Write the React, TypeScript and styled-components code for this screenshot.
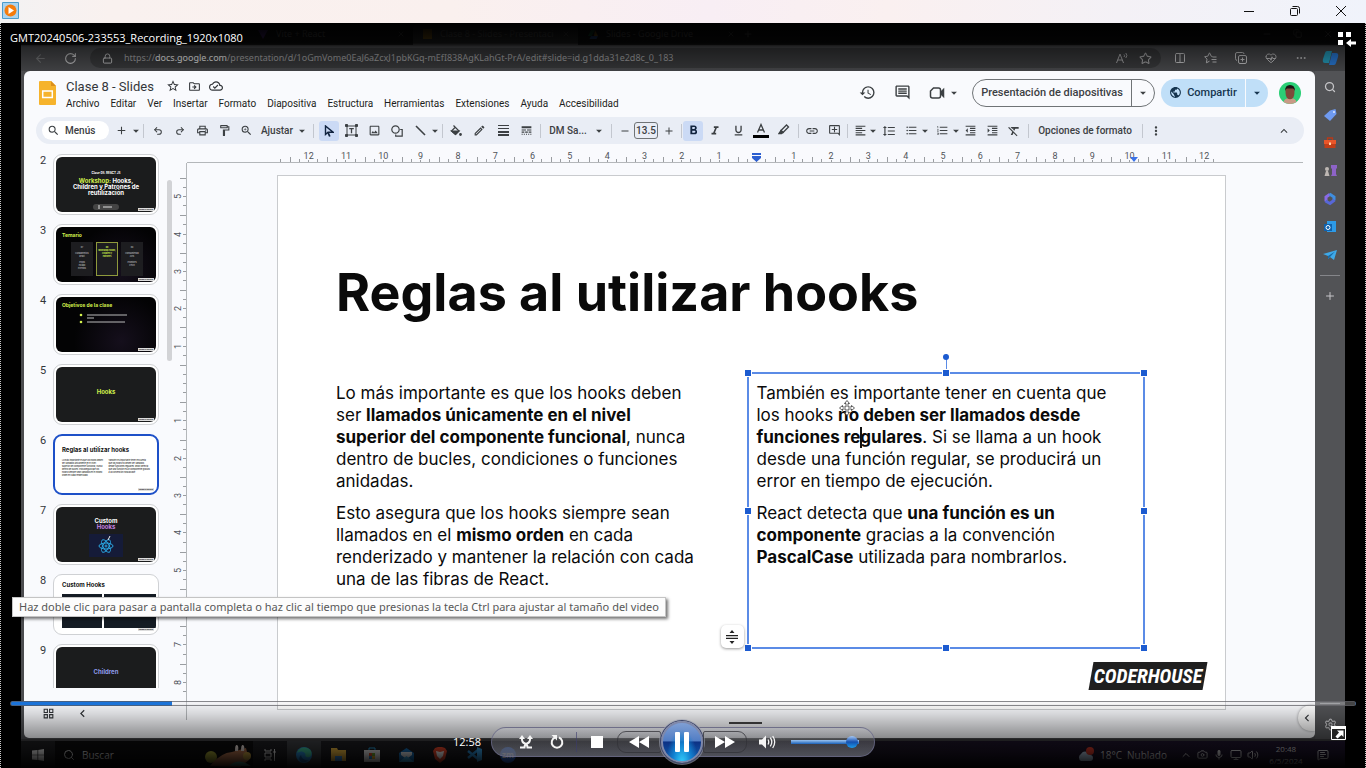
import React from "react";
import styled, { createGlobalStyle, css } from "styled-components";
import {
  MdAdd, MdArrowDropDown, MdChevronLeft, MdFormatAlignLeft, MdFormatBold, MdFormatClear,
  MdFormatIndentDecrease, MdFormatIndentIncrease, MdFormatItalic, MdFormatLineSpacing,
  MdFormatListBulleted, MdFormatListNumbered, MdFormatUnderlined, MdHistory, MdKeyboardArrowUp,
  MdLineStyle, MdLink, MdMoreVert, MdOutlineAddComment, MdOutlineCloudDone, MdOutlineDriveFileMove,
  MdOutlineEdit, MdOutlineFormatPaint, MdOutlineGridView, MdOutlineImage,
  MdOutlineInsertComment, MdOutlinePrint, MdPublic, MdRemove, MdSearch, MdStarBorder, MdZoomIn, MdMic,
} from "react-icons/md";
import {
  ArrowLeft, Columns2, Copy, HeartPulse, Lock, Minus, MoreHorizontal, Plus, Redo2, RotateCw, Search,
  Settings, Star, Undo2, X, MessageSquareText, ChevronUp, Volume2, Monitor, Camera,
} from "lucide-react";

const Global = createGlobalStyle`
  *, *::before, *::after { box-sizing: border-box; }
  body { margin: 0; background: #000; font-family: Roboto, "Liberation Sans", sans-serif; }
  button, input { font: inherit; color: inherit; margin: 0; }
  button { border: 0; padding: 0; background: none; }
  a { color: inherit; text-decoration: none; }
  h1, p, ol { margin: 0; padding: 0; }
  svg { display: block; flex: none; }
`;

const segoe = `"Open Sans", "Noto Sans", sans-serif`;
const slideFont = `"Inter", "Open Sans", sans-serif`;

/* ---------- window frame ---------- */
const Window = styled.div`
  display: flex;
  flex-direction: column;
  min-height: 100vh;
`;
const TitleBar = styled.header`
  display: flex;
  align-items: center;
  justify-content: space-between;
  height: 23px;
  padding: 0 17px 2px 2px;
  background: linear-gradient(90deg, #f3f2f3, #f9f1ef 8%, #faf0ee 33%, #f8eef4 52%, #faf0f0 65%, #f4f1f6 82%, #f0f3fb);
`;
const WindowButtons = styled.div`
  display: flex;
  gap: 30px;
`;
const PlainButton = styled.button`
  display: grid;
  place-items: center;
`;
const Stage = styled.main`
  position: relative;
  flex: 1;
  display: flex;
  padding: 0 20px;
  border: dotted #c8c8c8;
  border-width: 0 1px;
  background: #000;
`;
const Video = styled.div`
  flex: 1;
  min-width: 0;
  display: flex;
  flex-direction: column;
  background: #4b4c4f;
`;

/* ---------- browser ---------- */
const Tabs = styled.div`
  display: flex;
  align-items: center;
  height: 22px;
  padding-left: 62px;
  background: #1d1e20;
  color: #b5b5b5;
  font: 9px/14px "Noto Sans", sans-serif;
`;
const Tab = styled.div<{ $active?: boolean }>`
  display: flex;
  align-items: center;
  gap: 8px;
  width: 165px;
  height: 22px;
  padding: 0 8px 0 10px;
  white-space: nowrap;
  overflow: hidden;
  border-radius: 6px 6px 0 0;
  background: ${(p) => (p.$active ? "#4b4c4f" : "transparent")};
  span { flex: 1; overflow: hidden; }
`;
const TabButtons = styled.div`
  display: flex;
  gap: 21px;
  margin-left: auto;
  padding-right: 12px;
`;
const AddressRow = styled.div`
  display: flex;
  align-items: center;
  height: 26px;
  padding: 0 6px 0 13px;
  gap: 13px;
  color: #c9c9cb;
`;
const NavButtons = styled.div`
  display: flex;
  gap: 17px;
`;
const AddressBox = styled.div`
  flex: 1;
  display: flex;
  align-items: center;
  gap: 11px;
  height: 20px;
  padding: 0 9px 0 12px;
  border-radius: 10px;
  background: #3a3b3d;
  color: #a6a6a8;
  font: 9px/16px "Noto Sans", sans-serif;
  b { font-weight: 400; color: #f0f0f0; }
  a { flex: 1; }
`;
const AddressTools = styled.div`
  display: flex;
  align-items: center;
  gap: 18px;
  svg:last-child { margin-left: -3px; }
`;
const Body = styled.div`
  flex: 1;
  display: flex;
  padding-left: 3px;
`;
const EdgeBar = styled.aside`
  display: flex;
  flex-direction: column;
  align-items: center;
  gap: 12px;
  width: 30px;
  padding: 8px 0 8px;
  background: #525356;
  color: #c5c5c8;
`;
const EdgeRule = styled.hr`
  width: 20px;
  height: 1px;
  margin: 0 0 2px;
  border: 0;
  background: #85868a;
`;

/* ---------- presentation editor ---------- */
const Docs = styled.section`
  flex: 1;
  min-width: 0;
  display: flex;
  flex-direction: column;
  margin-bottom: 1px;
  border-radius: 6px 6px 5px 5px;
  background: #f9fafd;
  color: #33363a;
  overflow: hidden;
`;
const DocsHeader = styled.header`
  display: flex;
  align-items: center;
  height: 46px;
  padding: 0 14px 3px 15px;
`;
const Names = styled.div`
  display: flex;
  flex-direction: column;
  gap: 1px;
  margin: 4px 0 0 10px;
`;
const TitleRow = styled.div`
  display: flex;
  align-items: center;
  gap: 8px;
  height: 17px;
  font-size: 13px;
  line-height: 17px;
  span { margin-right: 4px; }
`;
const Menu = styled.nav`
  display: flex;
  gap: 11px;
  height: 16px;
  font-size: 10px;
  line-height: 16px;
  color: #1c1e20;
`;
const HeaderTools = styled.div`
  display: flex;
  align-items: center;
  margin-left: auto;
  gap: 18px;
  color: #3c4043;
`;
const CameraButton = styled(PlainButton)`
  display: flex;
  align-items: center;
  gap: 2px;
  margin-right: -7px;
`;
const SplitButton = styled.div<{ $filled?: boolean }>`
  display: flex;
  height: 28px;
  border-radius: 14px;
  font-size: 11px;
  font-weight: 500;
  ${(p) =>
    p.$filled
      ? css`
          margin: 0 -7px 0 -12px;
          background: #c0dff8;
          color: #16354f;
        `
      : css`
          border: 1px solid #6f7376;
          color: #3c4043;
        `}
  button { display: flex; align-items: center; justify-content: center; }
  button:first-child { gap: 5px; width: ${(p) => (p.$filled ? 84 : 158)}px; }
  button:last-child {
    width: 23px;
    border-left: 1px solid ${(p) => (p.$filled ? "#f9fafd" : "#6f7376")};
  }
`;
const Toolbar = styled.div`
  display: flex;
  align-items: center;
  height: 27px;
  margin: 0 11px 0 12px;
  padding: 0 10px 0 6px;
  border-radius: 14px;
  background: #e9edf5;
  color: #3c4043;
  font-size: 10px;
  font-weight: 500;
`;
const SearchPill = styled.button`
  display: flex;
  align-items: center;
  gap: 5px;
  width: 67px;
  height: 19px;
  padding-left: 5px;
  border-radius: 10px;
  background: #fff;
  font-weight: 500;
`;
const Tool = styled.button<{ $w?: number; $on?: boolean }>`
  display: flex;
  align-items: center;
  justify-content: center;
  width: ${(p) => p.$w ?? 22}px;
  height: 20px;
  border-radius: 3px;
  white-space: nowrap;
  font-weight: 500;
  background: ${(p) => (p.$on ? "#cbdaf5" : "transparent")};
`;
const Sep = styled.span<{ $w?: number }>`
  width: ${(p) => p.$w ?? 6}px;
  height: 14px;
  background: linear-gradient(#c3c7cf, #c3c7cf) center / 1px 100% no-repeat;
`;
const SizeInput = styled.input`
  width: 24px;
  height: 17px;
  margin: 0 1px;
  padding: 0;
  border: 1px solid #6f7376;
  border-radius: 3px;
  background: transparent;
  text-align: center;
  font-size: 10px;
`;
const Spacer = styled.span`
  flex: 1;
`;

const Workspace = styled.div`
  flex: 1;
  display: grid;
  grid-template-columns: 150px 13px minmax(0, 1fr);
`;
const LeftPane = styled.div`
  display: flex;
  flex-direction: column;
`;
const FilmArea = styled.div`
  flex: 1 1 0;
  min-height: 0;
  display: flex;
  justify-content: space-between;
  padding: 10px 2px 0 16px;
  overflow: hidden;
`;
const ScrollThumb = styled.div`
  width: 5px;
  height: 181px;
  margin-top: 26px;
  border-radius: 3px;
  background: #d2d3d6;
`;
const Film = styled.ol`
  display: flex;
  flex-direction: column;
  gap: 9px;
  list-style: none;
`;
const FilmItem = styled.li`
  display: grid;
  grid-template-columns: 13px 106px;
  height: 61px;
  font-size: 11px;
  line-height: 14px;
`;
const Frame = styled.div<{ $selected?: boolean }>`
  padding: ${(p) => (p.$selected ? 1 : 2)}px;
  height: 61px;
  border-radius: 9px;
  background: #fff;
  border: ${(p) => (p.$selected ? "2px solid #1d50c8" : "1px solid #cfd1d4")};
`;
const Mini = styled.div<{ $light?: boolean; $glow?: boolean }>`
  position: relative;
  display: flex;
  flex-direction: column;
  height: 100%;
  padding: 5px 6px;
  border-radius: 6px;
  overflow: hidden;
  color: #fff;
  background: ${(p) =>
    p.$light ? "#fff" : p.$glow ? "radial-gradient(circle at 65% 80%, #150f1c, #030304 60%)" : "#1b1c1d"};
  font: 700 6px/6px ${slideFont};
`;
const MiniText = styled.div<{ $color?: string; $top?: number; $left?: boolean; $small?: boolean }>`
  margin-top: ${(p) => p.$top ?? 0}px;
  text-align: ${(p) => (p.$left ? "left" : "center")};
  color: ${(p) => p.$color ?? "#fff"};
  font-size: ${(p) => (p.$small ? 3 : 6)}px;
`;
const MiniArt = styled.svg<{ $top: number; $left?: boolean }>`
  align-self: ${(p) => (p.$left ? "flex-start" : "center")};
  margin: ${(p) => p.$top}px 0 0 ${(p) => (p.$left ? 17 : 0)}px;
`;
const MiniTag = styled.i`
  position: absolute;
  right: 2px;
  bottom: 1px;
  padding: 0 1px;
  background: #ddd;
  color: #222;
  font: italic 700 2px/3px "Liberation Sans Narrow", "Liberation Sans", sans-serif;
`;
const Lime = styled.span`
  color: #d2f04c;
  font-size: 5px;
`;
const MiniCards = styled.div`
  display: grid;
  grid-template-columns: 22px 22px 22px;
  gap: 3px;
  margin: 4px 0 0 9px;
`;
const MiniCard = styled.div<{ $on?: boolean }>`
  height: 34px;
  padding: 3px 0;
  border: 1px solid ${(p) => (p.$on ? "#8f9a3c" : "#1d1d20")};
  background: #1d1d20;
  text-align: center;
  font-size: 2px;
  line-height: 3px;
  color: ${(p) => (p.$on ? "#d2f04c" : "#a5a5a8")};
`;
const MiniColumns = styled.div`
  display: grid;
  grid-template-columns: 1fr 1fr;
  gap: 5px;
  margin-top: 6px;
  color: #222;
  font-size: 2px;
  line-height: 3px;
  font-weight: 500;
`;
const MiniCode = styled.div`
  display: grid;
  grid-template-columns: 40px 54px;
  gap: 2px;
  margin-top: 6px;
  div { height: 34px; background: #151c24; }
`;
const BottomTools = styled.div`
  display: flex;
  align-items: center;
  gap: 20px;
  height: 50px;
  padding-left: 18px;
`;

const RulerV = styled.div`
  display: flex;
  flex-direction: column;
  margin: 19px 0 18px;
  padding: 15px 0 19px;
  border-right: 1px solid #b4b7ba;
  font-size: 9px;
  color: #50545a;
`;
const tick = "#9a9da1";
const CellV = styled.div`
  flex: 1;
  display: grid;
  place-items: center start;
  padding-right: 4px;
  background:
    linear-gradient(${tick}, ${tick}) right 0 top 0 / 6px 1px no-repeat,
    linear-gradient(${tick}, ${tick}) right 0 top 25% / 3px 1px no-repeat,
    linear-gradient(${tick}, ${tick}) right 0 top 50% / 3px 1px no-repeat,
    linear-gradient(${tick}, ${tick}) right 0 top 75% / 3px 1px no-repeat;
  span { transform: rotate(-90deg); line-height: 9px; width: 9px; text-align: center; }
`;
const RulerH = styled.div`
  position: relative;
  display: flex;
  height: 19px;
  margin-right: 12px;
  padding: 0 80px 0 93px;
  border-bottom: 1px solid #b4b7ba;
  font-size: 9px;
  color: #50545a;
`;
const RulerStart = styled.div`
  width: 10px;
  background: linear-gradient(${tick}, ${tick}) left 0 bottom 0 / 1px 3px no-repeat;
`;
const CellH = styled.div`
  flex: 1;
  padding-top: 8px;
  text-align: center;
  line-height: 9px;
  background:
    linear-gradient(${tick}, ${tick}) left 0 bottom 0 / 1px 5px no-repeat,
    linear-gradient(${tick}, ${tick}) left 25% bottom 0 / 1px 3px no-repeat,
    linear-gradient(${tick}, ${tick}) left 50% bottom 0 / 1px 2px no-repeat,
    linear-gradient(${tick}, ${tick}) left 75% bottom 0 / 1px 3px no-repeat;
`;
const Marker = styled.svg<{ $left: string }>`
  position: absolute;
  bottom: 0;
  left: ${(p) => p.$left};
`;
const Canvas = styled.div`
  display: flex;
  flex-direction: column;
`;
const Slide = styled.article`
  position: relative;
  margin: 12px 89px 0 90px;
  aspect-ratio: 948 / 534;
  padding: 81px 80px 0 48px;
  border: 1px solid #c9cbce;
  background: #fff;
  color: #0a0a0a;
  font-family: ${slideFont};
`;
const SlideTitle = styled.h1`
  padding-left: 10px;
  font-size: 52px;
  line-height: 72px;
  font-weight: 700;
  white-space: nowrap;
`;
const Columns = styled.div`
  display: grid;
  grid-template-columns: 1fr 1fr;
  gap: 22px;
  margin-top: 43px;
`;
const TextBox = styled.div<{ $selected?: boolean }>`
  position: relative;
  height: 277px;
  padding: 8px;
  border: 2px solid ${(p) => (p.$selected ? "#5b8be6" : "transparent")};
  font-size: 17px;
  line-height: 22px;
  white-space: nowrap;
  p + p { margin-top: 10px; }
`;
const Handle = styled.i<{ $x: string; $y: string }>`
  position: absolute;
  left: ${(p) => p.$x};
  top: ${(p) => p.$y};
  width: 6px;
  height: 6px;
  margin: -3px;
  background: #1c5bd0;
  outline: 1px solid #fff;
`;
const RotateHandle = styled.i`
  position: absolute;
  left: 50%;
  top: -20px;
  width: 1px;
  height: 16px;
  background: #5b8be6;
  &::before {
    content: "";
    position: absolute;
    left: -3px;
    top: 0;
    width: 6px;
    height: 6px;
    border-radius: 3px;
    background: #1c5bd0;
  }
`;
const Caret = styled.span`
  position: relative;
  &::before {
    content: "";
    position: absolute;
    left: 0;
    top: 0;
    width: 2px;
    height: 21px;
    background: #111;
  }
`;
const MoveCursor = styled.svg`
  position: absolute;
  left: 90px;
  top: 26px;
`;
const AutofitButton = styled.button`
  position: absolute;
  left: -28px;
  bottom: -1px;
  display: grid;
  place-items: center;
  width: 23px;
  height: 23px;
  border-radius: 5px;
  background: #fff;
  box-shadow: 0 1px 3px rgba(0, 0, 0, 0.4);
`;
const Brand = styled.div`
  position: absolute;
  right: 20px;
  bottom: 19px;
  display: grid;
  place-items: center;
  width: 114px;
  height: 28px;
  color: #fff;
  font: italic 700 20px/28px "Liberation Sans Narrow", "Roboto Condensed", "Liberation Sans", sans-serif;
  &::before {
    content: "";
    position: absolute;
    inset: 0;
    background: #1f1f1f;
    transform: skewX(-10deg);
  }
  span { position: relative; }
`;
const NotesBar = styled.div`
  flex: 1;
  display: flex;
  flex-direction: column;
  justify-content: space-between;
  align-items: flex-end;
`;
const NotesGrip = styled.i`
  align-self: center;
  width: 33px;
  height: 2px;
  margin: 12px 12px 0 0;
  background: #444;
`;
const PanelToggle = styled.button`
  display: grid;
  place-items: center;
  width: 17px;
  height: 26px;
  margin: -22px 0 7px;
  border-radius: 13px 0 0 13px;
  background: #fff;
  box-shadow: 0 0 3px rgba(0, 0, 0, 0.4);
`;

/* ---------- desktop task bar ---------- */
const Taskbar = styled.footer`
  display: flex;
  align-items: center;
  height: 29px;
  background: linear-gradient(90deg, #1d1e20, #1b1a20 50%, #1c1328 75%, #1d142c);
  border-top: 2px solid #3a3a3d;
  color: #cfcfd2;
  font: 10px/14px ${segoe};
`;
const TaskItem = styled.div<{ $active?: boolean }>`
  display: grid;
  place-items: center;
  width: 34px;
  height: 27px;
  background: ${(p) => (p.$active ? "#3a3c40" : "transparent")};
`;
const TaskSearch = styled.div`
  display: flex;
  align-items: center;
  gap: 7px;
  width: 198px;
  height: 27px;
  padding-left: 8px;
  background: #0c0c0d;
  svg:last-child { margin-left: auto; }
`;
const Tray = styled.div`
  display: flex;
  align-items: center;
  gap: 5px;
  margin-left: auto;
  padding-right: 16px;
  white-space: nowrap;
`;
const Clock = styled.div`
  width: 44px;
  text-align: center;
  font-size: 8px;
  line-height: 12px;
`;

/* ---------- player overlay ---------- */
const Shade = styled.div<{ $bottom?: boolean }>`
  position: absolute;
  left: 0;
  right: 0;
  pointer-events: none;
  ${(p) =>
    p.$bottom
      ? css`
          bottom: 0;
          height: 64px;
          background: linear-gradient(rgba(0,0,0,0.04), rgba(0,0,0,0.14) 10px, rgba(0,0,0,0.42) 32px, rgba(0,0,0,0.66) 48px, rgba(0,0,0,0.98));
        `
      : css`
          top: 0;
          height: 48px;
          background: linear-gradient(#000, rgba(0,0,0,0.88) 20px, rgba(0,0,0,0.5) 24px, rgba(0,0,0,0.16));
        `}
`;
const FileName = styled.div`
  position: absolute;
  left: 9px;
  top: 7px;
  color: #fff;
  font: 11px/16px ${segoe};
`;
const LibraryButton = styled(PlainButton)`
  position: absolute;
  right: 8px;
  top: 8px;
`;
const FullButton = styled(PlainButton)`
  position: absolute;
  right: 19px;
  bottom: 28px;
`;
const Seek = styled.input`
  position: absolute;
  left: 9px;
  right: 9px;
  bottom: 62px;
  width: calc(100% - 18px);
  height: 5px;
  appearance: none;
  border: 1px solid rgba(90, 90, 95, 0.7);
  border-radius: 3px;
  background: linear-gradient(90deg, #1b73d8 12%, rgba(225, 225, 228, 0.3) 12%);
  &::-webkit-slider-thumb { appearance: none; width: 0; height: 0; }
`;
const Controls = styled.div`
  position: absolute;
  left: 0;
  right: 0;
  bottom: 11px;
  display: grid;
  grid-template-columns: 1fr 384px 1fr;
  align-items: center;
`;
const Time = styled.span`
  justify-self: end;
  margin-right: 10px;
  color: #fff;
  font: 11px/16px ${segoe};
`;
const Pill = styled.div`
  display: flex;
  align-items: center;
  height: 30px;
  padding: 0 14px 0 18px;
  border: 1px solid rgba(105, 105, 135, 0.8);
  border-radius: 15px;
  background: linear-gradient(rgba(190, 192, 200, 0.4), rgba(140, 142, 150, 0.35) 45%, rgba(110, 112, 124, 0.7));
`;
const PlayerButton = styled.button`
  display: grid;
  place-items: center;
  width: 31px;
  height: 28px;
`;
const PillRule = styled.i`
  width: 1px;
  height: 20px;
  margin: 0 4px;
  background: rgba(60, 60, 110, 0.6);
`;
const SkipButton = styled.button<{ $right?: boolean }>`
  display: grid;
  place-items: center;
  width: 44px;
  height: 22px;
  margin-left: ${(p) => (p.$right ? 0 : 5)}px;
  border: 1px solid rgba(50, 50, 55, 0.75);
  border-radius: ${(p) => (p.$right ? "2px 9px 9px 2px" : "9px 2px 2px 9px")};
`;
const PauseButton = styled.button`
  display: grid;
  place-items: center;
  width: 42px;
  height: 42px;
  margin: -7px 0;
  border: 2px solid #7e88ab;
  border-radius: 50%;
  background: radial-gradient(ellipse at 50% 110%, #35d6ff, #1180d0 35%, transparent 60%),
    linear-gradient(#7f9fd4, #527dc4 47%, #0c3184 50%, #1463b4);
  box-shadow: 0 0 0 1px #3c4468, 0 0 0 2px rgba(160, 165, 180, 0.6);
`;
const SpeakerButton = styled(PlayerButton)`
  width: 40px;
`;
const Volume = styled.input`
  width: 68px;
  height: 14px;
  margin-left: 4px;
  appearance: none;
  background: linear-gradient(#9cc4f0, #1c62b8) center / 100% 4px no-repeat;
  &::-webkit-slider-thumb {
    appearance: none;
    width: 12px;
    height: 12px;
    border-radius: 6px;
    background: linear-gradient(#a5c8f5, #1450b0 50%, #1d9be8);
  }
`;
const Hint = styled.div`
  position: absolute;
  left: 11px;
  bottom: 151px;
  padding: 0 6px;
  border: 1px solid #c4c4c4;
  background: #fcfcfc;
  box-shadow: 2px 2px 3px rgba(0, 0, 0, 0.55);
  color: #575757;
  font: 11px/18px "Noto Sans", sans-serif;
  white-space: nowrap;
`;

const Down = () => <MdArrowDropDown size={14} />;

const TextBoxIcon = () => (
  <svg width="13" height="13" viewBox="0 0 13 13" fill="none" stroke="currentColor">
    <path d="M2 2h9v9H2z" />
    <path d="M.5.5h2v2h-2zM10.500.5h2v2h-2zM.5 10.500h2v2h-2zM10.500 10.500h2v2h-2z" fill="currentColor" />
    <path d="M4.200 4.700h4.600M6.500 4.700V9.200" strokeWidth="1.300" />
  </svg>
);
const ShapeIcon = () => (
  <svg width="12" height="12" viewBox="0 0 12 12" fill="none" stroke="currentColor" strokeWidth="1.200">
    <circle cx="4.500" cy="4.500" r="3.700" />
    <path d="M9.200 4.500h2v6.700H4.700V9.400" />
  </svg>
);
const FillIcon = () => (
  <svg width="12" height="12" viewBox="0 0 12 12" fill="none" stroke="currentColor" strokeWidth="1.200">
    <path d="M3.500.5 9 6 5.500 9.500 1.500 6l4-4" />
    <path d="M1.500 6H9L5.500 9.500z" fill="currentColor" />
    <circle cx="10.500" cy="9.500" r=".8" fill="currentColor" />
  </svg>
);
const HighlightIcon = () => (
  <svg width="12" height="14" viewBox="0 0 12 14" fill="none" stroke="currentColor" strokeWidth="1.300">
    <path d="M3 6.500 8.500 1l2 2L5 8.500z" />
    <path d="M3 6.500 5 8.500 3.500 9.500H1z" fill="currentColor" />
  </svg>
);
const TextColorIcon = () => (
  <svg width="16" height="16" viewBox="0 0 16 16" fill="none" stroke="currentColor" strokeWidth="1.300">
    <path d="M4.500 9.500 8 1.500l3.500 8M5.700 7h4.600" />
    <path d="M0 12h16v3H0z" fill="#000" stroke="none" />
  </svg>
);
const WeightIcon = () => (
  <svg width="11" height="11" viewBox="0 0 11 11" fill="currentColor">
    <path d="M0 0h11v1H0zM0 3h11v1H0zM0 6h11v2H0zM0 9h11v2H0z" />
  </svg>
);
const FavoritesIcon = () => (
  <svg width="13" height="12" viewBox="0 0 13 12" fill="none" stroke="currentColor">
    <path d="M8.500 4.500 7.300 4.300 5.500.8 3.800 4.200.6 4.700l2.400 2.400-.6 3.700 3.100-1.600" strokeLinejoin="round" />
    <path d="M8.500 5h4M7.500 7.500h5M8.500 10h4" />
  </svg>
);
const CollectionsIcon = () => (
  <svg width="12" height="12" viewBox="0 0 12 12" fill="none" stroke="currentColor">
    <rect x="3.500" y="3.500" width="8" height="8" rx="1.500" />
    <path d="M2 8.500Q.5 8 .5 6.500V2Q.5.500 2 .5h5.500Q9 .5 9 2M7.500 5.500v4M5.500 7.500h4" />
  </svg>
);

const menus = ["Archivo", "Editar", "Ver", "Insertar", "Formato", "Diapositiva", "Estructura", "Herramientas", "Extensiones", "Ayuda", "Accesibilidad"];
const hMarks = [12, 11, 10, 9, 8, 7, 6, 5, 4, 3, 2, 1, 0, 1, 2, 3, 4, 5, 6, 7, 8, 9, 10, 11, 12];
const vMarks = [5, 4, 3, 2, 1, 0, 1, 2, 3, 4, 5, 6, 7, 8];
const handles: [string, string][] = [
  ["-1px", "-1px"], ["50%", "-1px"], ["calc(100% + 1px)", "-1px"], ["-1px", "50%"],
  ["calc(100% + 1px)", "50%"], ["-1px", "calc(100% + 1px)"], ["50%", "calc(100% + 1px)"], ["calc(100% + 1px)", "calc(100% + 1px)"],
];

const thumbs: { n: number; selected?: boolean; body: React.ReactNode }[] = [
  {
    n: 2,
    body: (
      <Mini>
        <MiniText $top={8} $small>Clase 08. REACT JS</MiniText>
        <MiniText $top={2}><span style={{ color: "#d2f04c" }}>Workshop:</span> Hooks,<br />Children y Patrones de<br />reutilización</MiniText>
        <MiniArt $top={8} width="26" height="6" viewBox="0 0 26 6">
          <rect width="26" height="6" rx="3" fill="#444" /><path d="M6 1v4M10 3h9" stroke="#ddd" />
        </MiniArt>
        <MiniTag>CODERHOUSE</MiniTag>
      </Mini>
    ),
  },
  {
    n: 3,
    body: (
      <Mini $glow>
        <Lime>Temario</Lime>
        <MiniCards>
          <MiniCard>07<br /><br />Fundamentos<br />React<br /><br />Props<br />Estado<br />Eventos</MiniCard>
          <MiniCard $on>08<br />Workshop Hooks,<br />Children y<br />Patrones</MiniCard>
          <MiniCard>09<br /><br />Consumiendo<br />APIs<br /><br />Promises<br />Fetch</MiniCard>
        </MiniCards>
        <MiniTag>CODERHOUSE</MiniTag>
      </Mini>
    ),
  },
  {
    n: 4,
    body: (
      <Mini $glow>
        <Lime>Objetivos de la clase</Lime>
        <MiniArt $top={4} $left width="60" height="12" viewBox="0 0 60 12">
          <circle cx="2" cy="3" r="1.300" fill="#d2f04c" /><circle cx="2" cy="10" r="1.300" fill="#d2f04c" />
          <path d="M8 3h40M8 6h7M8 10h38" stroke="#bbb" />
        </MiniArt>
        <MiniTag>CODERHOUSE</MiniTag>
      </Mini>
    ),
  },
  { n: 5, body: <Mini><MiniText $top={17} $color="#d2f04c">Hooks</MiniText><MiniTag>CODERHOUSE</MiniTag></Mini> },
  {
    n: 6,
    selected: true,
    body: (
      <Mini $light>
        <MiniText $left $color="#111" $top={5}>Reglas al utilizar hooks</MiniText>
        <MiniColumns>
          <span>Lo más importante es que los hooks deben ser llamados únicamente en el nivel superior del componente funcional, nunca dentro de bucles. Esto asegura que los hooks siempre sean llamados en el mismo orden en cada renderizado.</span>
          <span>También es importante tener en cuenta que los hooks no deben ser llamados desde funciones regulares. React detecta que una función es un componente gracias a la convención PascalCase.</span>
        </MiniColumns>
        <MiniTag>CODERHOUSE</MiniTag>
      </Mini>
    ),
  },
  {
    n: 7,
    body: (
      <Mini>
        <MiniText $top={6}>Custom</MiniText>
        <MiniText $color="#c682e0">Hooks</MiniText>
        <MiniArt $top={4} width="34" height="23" viewBox="0 0 34 23" fill="none" stroke="#2aa5e0">
          <rect width="34" height="23" fill="#151b38" stroke="none" />
          <ellipse cx="17" cy="12" rx="7" ry="3" /><ellipse cx="17" cy="12" rx="7" ry="3" transform="rotate(60 17 12)" />
          <ellipse cx="17" cy="12" rx="7" ry="3" transform="rotate(120 17 12)" /><circle cx="17" cy="12" r="1" />
          <path d="m19 6 2-4" stroke="#eee" />
        </MiniArt>
        <MiniTag>CODERHOUSE</MiniTag>
      </Mini>
    ),
  },
  {
    n: 8,
    body: (
      <Mini $light>
        <MiniText $left $color="#111">Custom Hooks</MiniText>
        <MiniCode><div /><div /></MiniCode>
        <MiniTag>CODERHOUSE</MiniTag>
      </Mini>
    ),
  },
  { n: 9, body: <Mini><MiniText $top={17} $color="#8e9bea">Children</MiniText></Mini> },
];

export default function App() {
  return (
    <>
      <Global />
      <Window>
        <TitleBar>
          <svg width="17" height="17" viewBox="0 0 17 17">
            <path d="M.5.5h16v16H.5z" fill="#a9d3ef" stroke="#4c9ccc" />
            <circle cx="8.500" cy="8.500" r="6" fill="#f57c0c" />
            <path d="m6.500 5 5.500 3.500-5.500 3.500z" fill="#fff" />
          </svg>
          <WindowButtons>
            <PlainButton aria-label="Minimizar"><svg width="16" height="12" viewBox="0 0 16 12"><path d="M3 6.500h10" stroke="#111" /></svg></PlainButton>
            <PlainButton aria-label="Restaurar"><svg width="16" height="12" viewBox="0 0 16 12" fill="none" stroke="#111"><rect x="3.500" y="3.500" width="7" height="7" rx="1" /><path d="M5.500 1.500h5q2 0 2 2v5" /></svg></PlainButton>
            <PlainButton aria-label="Cerrar"><svg width="16" height="12" viewBox="0 0 16 12" stroke="#111"><path d="m3 1 10 10M13 1 3 11" /></svg></PlainButton>
          </WindowButtons>
        </TitleBar>

        <Stage>
          <Video>
            <Tabs>
              <Tab><span>React | Plataforma</span></Tab>
              <Tab><svg width="10" height="10" viewBox="0 0 10 10"><path d="M0 1h10L5 10z" fill="#8d4cf0" /></svg><span>Vite + React</span><X size={8} /></Tab>
              <Tab $active><svg width="9" height="10" viewBox="0 0 9 10"><path d="M0 0h9v10H0z" fill="#f4b02a" /></svg><span>Clase 8 - Slides - Presentaciones</span><X size={8} /></Tab>
              <Tab><svg width="10" height="9" viewBox="0 0 10 9"><path d="M3 0h4L3.500 6 0 6z" fill="#1fa463" /><path d="m7 0 3 6H6z" fill="#f4b02a" /><path d="M3 6h7L8.500 9H1.500z" fill="#4285f4" /></svg><span>Slides - Google Drive</span><X size={8} /></Tab>
              <Plus size={10} />
              <TabButtons><Minus size={10} /><Copy size={9} /><X size={10} /></TabButtons>
            </Tabs>
            <AddressRow>
              <NavButtons><ArrowLeft size={13} color="#77787a" /><RotateCw size={13} /></NavButtons>
              <AddressBox>
                <Lock size={11} color="#c9c9cb" />
                <a href="#slide">https://<b>docs.google.com</b>/presentation/d/1oGmVome0EaJ6aZcxJ1pbKGq-mEfI838AgKLahGt-PrA/edit#slide=id.g1dda31e2d8c_0_183</a>
                <svg width="12" height="12" viewBox="0 0 12 12" fill="none" stroke="currentColor"><path d="m.5 11 3.500-9 3.500 9M1.700 8h4.600M8 2.500q1.300 1.200 0 2.500M9.800 1q2.200 2.500 0 5" /></svg>
                <Star size={13} />
              </AddressBox>
              <AddressTools>
                <Columns2 size={12} />
                <FavoritesIcon />
                <CollectionsIcon />
                <HeartPulse size={12} />
                <MoreHorizontal size={12} />
                <svg width="17" height="16" viewBox="0 0 17 16">
                  <path d="M5 1h5L7 13H3Q0 13 1 9L3 3q.5-2 2-2z" fill="#27a3c4" />
                  <path d="M12 15H7l3-12h4q3 0 2 4l-2 6q-.500 2-2 2z" fill="#2b7fe0" />
                </svg>
              </AddressTools>
            </AddressRow>

            <Body>
              <Docs>
                <DocsHeader>
                  <svg width="17" height="24" viewBox="0 0 17 24">
                    <path d="M1 0h11l5 5v18q0 1-1 1H1q-1 0-1-1V1q0-1 1-1z" fill="#f6b32c" />
                    <path d="m12 0 5 5h-5z" fill="#dc8f1b" />
                    <path d="M3.700 10h9.600v6.500H3.700z" fill="none" stroke="#fff" strokeWidth="1.500" />
                  </svg>
                  <Names>
                    <TitleRow><span>Clase 8 - Slides</span><MdStarBorder size={14} /><MdOutlineDriveFileMove size={13} /><MdOutlineCloudDone size={14} /></TitleRow>
                    <Menu>{menus.map((m) => <a key={m} href={`#${m}`}>{m}</a>)}</Menu>
                  </Names>
                  <HeaderTools>
                    <PlainButton aria-label="Historial"><MdHistory size={17} /></PlainButton>
                    <PlainButton aria-label="Comentarios"><MdOutlineInsertComment size={17} /></PlainButton>
                    <CameraButton aria-label="Videollamada">
                      <svg width="16" height="14" viewBox="0 0 16 14" fill="none" stroke="currentColor" strokeWidth="1.500">
                        <path d="M4.500 2H9.500q2 0 2 2v6q0 2-2 2H3.500q-2 0-2-2V5z" /><path d="m12 6 2.500-2.500v7L12 8z" fill="currentColor" />
                      </svg>
                      <Down />
                    </CameraButton>
                    <SplitButton><button>Presentación de diapositivas</button><button aria-label="Opciones de presentación"><Down /></button></SplitButton>
                    <SplitButton $filled><button><MdPublic size={13} />Compartir</button><button aria-label="Opciones para compartir"><Down /></button></SplitButton>
                    <svg width="22" height="22" viewBox="0 0 22 22">
                      <circle cx="11" cy="11" r="11" fill="#2bcf76" />
                      <path d="M4.500 20q1-4 6.500-4t6.500 4q-6.500 4-13 0z" fill="#c99a86" />
                      <path d="M6.500 9q0-5 4.500-5t4.500 5-1.500 7q-3 2.500-6 0-1.500-2-1.500-7z" fill="#7d4a3a" />
                      <path d="M6 9q0-6 5-6t5 6q-1-2.500-2-2.500H8Q7 6.500 6 9z" fill="#1b1412" />
                    </svg>
                  </HeaderTools>
                </DocsHeader>

                <Toolbar>
                  <SearchPill><MdSearch size={13} /><span>Menús</span></SearchPill>
                  <Tool $w={24} aria-label="Nueva diapositiva"><MdAdd size={13} /></Tool>
                  <Tool $w={6} aria-label="Diseños"><Down /></Tool>
                  <Sep $w={8} />
                  <Tool aria-label="Deshacer"><Undo2 size={10} strokeWidth={2.5} /></Tool>
                  <Tool aria-label="Rehacer"><Redo2 size={10} strokeWidth={2.5} /></Tool>
                  <Tool aria-label="Imprimir"><MdOutlinePrint size={13} /></Tool>
                  <Tool aria-label="Copiar formato"><MdOutlineFormatPaint size={13} /></Tool>
                  <Tool aria-label="Zoom"><MdZoomIn size={13} /></Tool>
                  <Tool $w={40}>Ajustar</Tool>
                  <Tool $w={10} aria-label="Nivel de zoom"><Down /></Tool>
                  <Sep $w={12} />
                  <Tool $w={20} $on aria-label="Seleccionar">
                    <svg width="10" height="12" viewBox="0 0 10 12" fill="none" stroke="#10233f" strokeWidth="1.400"><path d="M1.500 1v8.500L4 7.200h5z" /><path d="m4 7.500 1.800 4" strokeWidth="1.800" /></svg>
                  </Tool>
                  <Tool $w={24} aria-label="Cuadro de texto"><TextBoxIcon /></Tool>
                  <Tool aria-label="Imagen"><MdOutlineImage size={13} /></Tool>
                  <Tool $w={24} aria-label="Forma"><ShapeIcon /></Tool>
                  <Tool aria-label="Línea"><svg width="11" height="11" viewBox="0 0 11 11"><path d="m1 1 9 9" stroke="currentColor" strokeWidth="1.600" /></svg></Tool>
                  <Tool $w={8} aria-label="Tipos de línea"><Down /></Tool>
                  <Sep />
                  <Tool aria-label="Relleno"><FillIcon /></Tool>
                  <Tool $w={24} aria-label="Color del borde"><MdOutlineEdit size={13} /></Tool>
                  <Tool $w={24} aria-label="Grosor"><WeightIcon /></Tool>
                  <Tool aria-label="Guiones"><MdLineStyle size={13} /></Tool>
                  <Sep />
                  <Tool $w={50}>DM Sa...</Tool>
                  <Tool $w={12} aria-label="Fuente"><Down /></Tool>
                  <Sep $w={12} />
                  <Tool $w={16} aria-label="Reducir"><MdRemove size={12} /></Tool>
                  <SizeInput aria-label="Tamaño de fuente" defaultValue="13.5" />
                  <Tool $w={20} aria-label="Aumentar"><MdAdd size={12} /></Tool>
                  <Sep $w={4} />
                  <Tool $w={20} $on aria-label="Negrita"><MdFormatBold size={15} color="#10233f" /></Tool>
                  <Tool $w={24} aria-label="Cursiva"><MdFormatItalic size={14} /></Tool>
                  <Tool aria-label="Subrayado"><MdFormatUnderlined size={13} /></Tool>
                  <Tool $w={24} aria-label="Color del texto"><TextColorIcon /></Tool>
                  <Tool aria-label="Resaltar"><HighlightIcon /></Tool>
                  <Sep />
                  <Tool aria-label="Enlace"><MdLink size={14} /></Tool>
                  <Tool aria-label="Comentario"><MdOutlineAddComment size={13} /></Tool>
                  <Sep $w={4} />
                  <Tool aria-label="Alinear"><MdFormatAlignLeft size={13} /></Tool>
                  <Tool $w={4} aria-label="Alineación"><Down /></Tool>
                  <Tool $w={28} aria-label="Interlineado"><MdFormatLineSpacing size={14} /></Tool>
                  <Tool $w={16} aria-label="Viñetas"><MdFormatListBulleted size={13} /></Tool>
                  <Tool $w={12} aria-label="Tipos de viñetas"><Down /></Tool>
                  <Tool aria-label="Numeración"><MdFormatListNumbered size={13} /></Tool>
                  <Tool $w={6} aria-label="Tipos de numeración"><Down /></Tool>
                  <Tool aria-label="Reducir sangría"><MdFormatIndentDecrease size={13} /></Tool>
                  <Tool aria-label="Aumentar sangría"><MdFormatIndentIncrease size={13} /></Tool>
                  <Tool aria-label="Borrar formato"><MdFormatClear size={14} /></Tool>
                  <Sep />
                  <Tool $w={108}>Opciones de formato</Tool>
                  <Sep />
                  <Tool aria-label="Más"><MdMoreVert size={14} /></Tool>
                  <Spacer />
                  <Tool $w={20} aria-label="Ocultar menús"><MdKeyboardArrowUp size={14} /></Tool>
                </Toolbar>

                <Workspace>
                  <LeftPane>
                    <FilmArea>
                      <Film>
                        {thumbs.map((t) => (
                          <FilmItem key={t.n}><span>{t.n}</span><Frame $selected={t.selected}>{t.body}</Frame></FilmItem>
                        ))}
                      </Film>
                      <ScrollThumb />
                    </FilmArea>
                    <BottomTools>
                      <PlainButton aria-label="Vista de cuadrícula"><MdOutlineGridView size={13} /></PlainButton>
                      <PlainButton aria-label="Ocultar tira"><MdChevronLeft size={15} /></PlainButton>
                    </BottomTools>
                  </LeftPane>
                  <RulerV>{vMarks.map((n, i) => <CellV key={i}><span>{n || ""}</span></CellV>)}</RulerV>
                  <Canvas>
                    <RulerH>
                      <RulerStart />
                      {hMarks.map((n, i) => <CellH key={i}>{n || ""}</CellH>)}
                      <Marker $left="50.600%" width="9" height="9" viewBox="0 0 9 9"><path d="M0 0h9v2H0zM0 3h9v2L4.500 9 0 5z" fill="#2c5fd0" /></Marker>
                      <Marker $left="84.500%" width="8" height="5" viewBox="0 0 8 5"><path d="M0 0h8L4 5z" fill="#3a72e8" /></Marker>
                    </RulerH>
                    <Slide>
                      <SlideTitle>Reglas al utilizar hooks</SlideTitle>
                      <Columns>
                        <TextBox>
                          <p>Lo más importante es que los hooks deben<br />ser <b>llamados únicamente en el nivel<br />superior del componente funcional</b>, nunca<br />dentro de bucles, condiciones o funciones<br />anidadas.</p>
                          <p>Esto asegura que los hooks siempre sean<br />llamados en el <b>mismo orden</b> en cada<br />renderizado y mantener la relación con cada<br />una de las fibras de React.</p>
                        </TextBox>
                        <TextBox $selected>
                          <p>También es importante tener en cuenta que<br />los hooks <b>no deben ser llamados desde<br />funciones re<Caret />gulares</b>. Si se llama a un hook<br />desde una función regular, se producirá un<br />error en tiempo de ejecución.</p>
                          <p>React detecta que <b>una función es un<br />componente</b> gracias a la convención<br /><b>PascalCase</b> utilizada para nombrarlos.</p>
                          <RotateHandle />
                          {handles.map(([x, y]) => <Handle key={x + y} $x={x} $y={y} />)}
                          <MoveCursor width="16" height="16" viewBox="0 0 16 16" fill="#fff" stroke="#333" strokeWidth=".8">
                            <path d="m8 .5 2.500 3H9V7h3.500V5.500l3 2.500-3 2.500V9H9v3.500h1.500L8 15.500l-2.500-3H7V9H3.500v1.500L.5 8l3-2.500V7H7V3.500H5.500z" />
                          </MoveCursor>
                          <AutofitButton aria-label="Ajuste automático">
                            <svg width="14" height="14" viewBox="0 0 14 14" fill="#222"><path d="M1 5h12v1.200H1zM1 7.800h12V9H1zM7 0l2.500 3h-5zM7 14l2.500-3h-5z" /></svg>
                          </AutofitButton>
                        </TextBox>
                      </Columns>
                      <Brand><span>CODERHOUSE</span></Brand>
                    </Slide>
                    <NotesBar>
                      <NotesGrip />
                      <PanelToggle aria-label="Mostrar panel lateral"><MdChevronLeft size={14} /></PanelToggle>
                    </NotesBar>
                  </Canvas>
                </Workspace>
              </Docs>

              <EdgeBar>
                <Search size={12} strokeWidth={2.5} style={{ margin: 2 }} />
                <svg width="16" height="16" viewBox="0 0 16 16"><path d="M8 3.500 13.500 2l1 5-6.500 7L2 9z" fill="#6f9af0" /><circle cx="12" cy="5" r="1" fill="#dfe9ff" /></svg>
                <svg width="16" height="16" viewBox="0 0 16 16"><path d="M5.500 5V3h5v2" fill="none" stroke="#b93a18" strokeWidth="1.300" /><path d="M2 5h12v4H2z" fill="#e8562a" /><path d="M2.500 9h11v4h-11z" fill="#c03e18" /><path d="M7 7.500h2v2.500H7z" fill="#ffd2a8" /></svg>
                <svg width="16" height="16" viewBox="0 0 16 16"><circle cx="5" cy="6" r="2" fill="#bdb7b3" /><path d="M4 8h2l1.500 5h-5z" fill="#bdb7b3" /><path d="M9 2h6v3l-1 1v5l1 2H9l1-2V6L9 5z" fill="#8d63c7" /></svg>
                <svg width="16" height="16" viewBox="0 0 16 16" fill="none" strokeWidth="3"><path d="M4 10.500V6l4-2.800" stroke="#8a6ae6" /><path d="m7.500 3 4.500 3v3.500" stroke="#3f8ee0" /><path d="m12.500 9-4.500 3.500L3.500 10" stroke="#5767d8" /></svg>
                <svg width="16" height="16" viewBox="0 0 16 16"><path d="M5 2h9v11H5z" fill="#2d9be8" /><path d="M2 5h8v7H2z" fill="#0f62ad" /><circle cx="6" cy="8.500" r="2" fill="none" stroke="#fff" /></svg>
                <svg width="16" height="16" viewBox="0 0 16 16"><path d="m1 7 14-4-3 10-4-3-2 2V9z" fill="#3fa9e8" /><path d="m6 9 7-4.500L8 10l-2 2z" fill="#176aa8" /></svg>
                <EdgeRule />
                <Plus size={12} />
                <Spacer />
                <EdgeRule />
                <Settings size={13} />
              </EdgeBar>
            </Body>

            <Taskbar>
              <TaskItem><svg width="12" height="12" viewBox="0 0 12 12" fill="#e8e8e8"><path d="M0 1.500 5.500 1v4.700H0zM6.200.9 12 0v5.700H6.200zM0 6.300h5.500V11L0 10.500zM6.200 6.300H12V12l-5.800-.9z" /></svg></TaskItem>
              <TaskSearch>
                <Search size={12} /><span>Buscar</span>
                <svg width="48" height="24" viewBox="0 0 48 24">
                  <circle cx="6" cy="14" r="6" fill="#a3a235" /><path d="M5 23Q15 10 27 9l14-4 3 12-9 7z" fill="#b97650" />
                  <path d="M30 8q0-7 2-6t1 6M36 8q0-7 2-6t1 6" fill="#e8ddd8" /><path d="M24 23q9-9 22 0z" fill="#5cb5a6" /><circle cx="42" cy="13" r="4" fill="#d0a845" />
                </svg>
              </TaskSearch>
              <TaskItem><svg width="12" height="12" viewBox="0 0 12 12" fill="none" stroke="#ddd"><path d="M1 4h6v4H1zM1 0v2h6V0M1 12v-2h6v2M10.500 0v12M9 3h3" /></svg></TaskItem>
              <TaskItem $active><svg width="16" height="16" viewBox="0 0 16 16"><circle cx="8" cy="8" r="8" fill="#2b8fd6" /><path d="M1 6q2-6 8-5.500 7 1 6.500 6.500-1 4-5 3-2-1-1-3Q8 4 5 4.500 2 5 1 6z" fill="#43c9a0" /><path d="M5 8q1 6 8 5-5 4-9 1-2-3 1-6z" fill="#155a9c" /></svg></TaskItem>
              <TaskItem><svg width="15" height="13" viewBox="0 0 15 13"><path d="M0 0h6l1 2h8v11H0z" fill="#f2bd42" /><path d="M4 8h7v5H4z" fill="#3d8fdc" /></svg></TaskItem>
              <TaskItem><svg width="16" height="15" viewBox="0 0 16 15"><path d="M5 4V1h6v3" fill="none" stroke="#2aa3e0" /><path d="M0 3h16v12H0z" fill="#ececec" /><path d="M5 6h3v3H5z" fill="#e8502c" /><path d="M8 6h3v3H8z" fill="#75b030" /><path d="M5 9h3v3H5z" fill="#2a8fe0" /><path d="M8 9h3v3H8z" fill="#f2b52c" /></svg></TaskItem>
              <TaskItem><svg width="15" height="14" viewBox="0 0 15 14"><path d="M0 5 7.500 0 15 5v9H0z" fill="#1673bd" /><path d="M2 4h11v3L7.500 11 2 7z" fill="#e8eef3" /><path d="m0 14 7.500-6 7.500 6z" fill="#3cb2ee" /></svg></TaskItem>
              <TaskItem><svg width="14" height="16" viewBox="0 0 14 16"><path d="m2 1 3-1h4l3 1 2 3-2 8-5 4-5-4L0 4z" fill="#f0482a" /><path d="m3 4 4 1 4-1-1 5-3 3-3-3z" fill="#fff" /></svg></TaskItem>
              <TaskItem><svg width="15" height="15" viewBox="0 0 15 15"><path d="m1 4 10 8M1 11l10-8" stroke="#2a8fd6" strokeWidth="2.500" /><path d="m10 0 5 2v11l-5 2z" fill="#3aa6ee" /></svg></TaskItem>
              <TaskItem><svg width="16" height="16" viewBox="0 0 16 16"><circle cx="8" cy="8" r="8" fill="#2f6fe8" /><text x="8" y="11" textAnchor="middle" fontSize="8" fontWeight="700" fill="#fff">zm</text></svg></TaskItem>
              <Tray>
                <svg width="18" height="15" viewBox="0 0 18 15"><path d="M4 14a4 4 0 0 1 0-7 5 5 0 0 1 9 1 3 3 0 0 1 0 6z" fill="#b9cfe8" /><circle cx="13" cy="4" r="4" fill="#d93a2a" /></svg>
                <span>18°C</span>
                <span>Nublado</span>
                <ChevronUp size={12} style={{ marginLeft: 8 }} />
                <Camera size={11} />
                <MdMic size={12} />
                <Monitor size={12} />
                <Volume2 size={12} />
                <Clock>20:48<br />6/5/2024</Clock>
                <MessageSquareText size={12} style={{ marginLeft: 4 }} />
              </Tray>
            </Taskbar>
          </Video>

          <Shade />
          <Shade $bottom />
          <FileName>GMT20240506-233553_Recording_1920x1080</FileName>
          <LibraryButton aria-label="Ir a la biblioteca">
            <svg width="19" height="16" viewBox="0 0 19 16" fill="#fff"><path d="M0 1h5v5H0zM8 1h5v5H8zM0 9h5v5H0zM13 8v2.500h5v3h-5V16L8 12z" /></svg>
          </LibraryButton>
          <FullButton aria-label="Pantalla completa">
            <svg width="15" height="14" viewBox="0 0 15 14"><path d="M.5.5h14v13H.5z" fill="#222" stroke="#fff" /><path d="M0 0h15v3H0z" fill="#fff" /><path d="M6 4.500h6.500V11l-2-2-4 3.500-2-2 3.500-4z" fill="#fff" /></svg>
          </FullButton>
          <Seek type="range" aria-label="Buscar" defaultValue={12} />
          <Controls>
            <Time>12:58</Time>
            <Pill>
              <PlayerButton aria-label="Orden aleatorio">
                <svg width="14" height="14" viewBox="0 0 14 14" fill="none" stroke="#f4f4f4" strokeWidth="2"><path d="M3 3q-.5 4.500 3 5.500 2.500 1 2.500 4H13M11 3q.5 4.500-3 5.500-2.500 1-2.500 4H1" /><path d="M0 4 3 0l3 4zM8 4l3-4 3 4z" fill="#f4f4f4" stroke="none" /></svg>
              </PlayerButton>
              <PlayerButton aria-label="Repetir">
                <svg width="14" height="14" viewBox="0 0 14 14" fill="none" stroke="#f4f4f4" strokeWidth="2"><path d="M9 2.500a5.300 5.300 0 1 1-4 0" /><path d="M1.500 0H7v5.500z" fill="#f4f4f4" stroke="none" /></svg>
              </PlayerButton>
              <PillRule />
              <PlayerButton aria-label="Detener"><svg width="12" height="12" viewBox="0 0 12 12"><path d="M0 0h12v12H0z" fill="#fff" /></svg></PlayerButton>
              <SkipButton aria-label="Anterior"><svg width="20" height="12" viewBox="0 0 20 12" fill="#fff"><path d="M10 0v12L0 6zM20 0v12L10 6z" /></svg></SkipButton>
              <PauseButton aria-label="Pausar"><svg width="14" height="20" viewBox="0 0 14 20" fill="#fff"><rect width="5" height="20" rx="1" /><rect x="9" width="5" height="20" rx="1" /></svg></PauseButton>
              <SkipButton $right aria-label="Siguiente"><svg width="20" height="12" viewBox="0 0 20 12" fill="#fff"><path d="M0 0v12l10-6zM10 0v12l10-6z" /></svg></SkipButton>
              <SpeakerButton aria-label="Silenciar">
                <svg width="17" height="14" viewBox="0 0 17 14" fill="none" stroke="#f4f4f4" strokeWidth="1.300"><path d="M0 4.500h3L7 .5v13l-4-4H0z" fill="#f4f4f4" stroke="none" /><path d="M9 4.500q1.500 2.500 0 5M11.300 2.700q3 4.300 0 8.600M13.700 1q4 6 0 12" /></svg>
              </SpeakerButton>
              <Volume type="range" aria-label="Volumen" defaultValue={98} />
            </Pill>
          </Controls>
          <Hint role="tooltip">Haz doble clic para pasar a pantalla completa o haz clic al tiempo que presionas la tecla Ctrl para ajustar al tamaño del video</Hint>
        </Stage>
      </Window>
    </>
  );
}
